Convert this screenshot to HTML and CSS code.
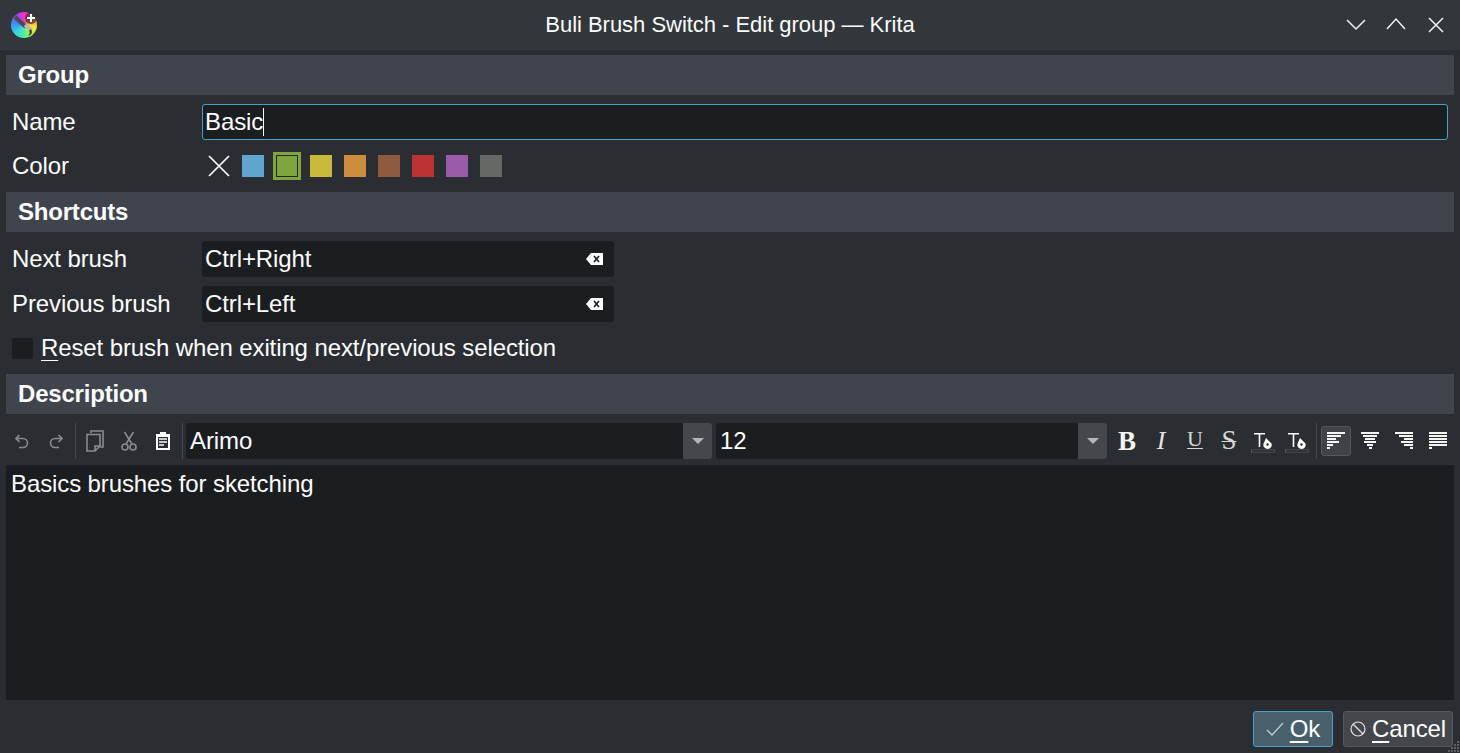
FILE: index.html
```html
<!DOCTYPE html>
<html lang="en">
<head>
<meta charset="utf-8">
<title>Buli Brush Switch - Edit group — Krita</title>
<link rel="stylesheet" href="styles.css">
</head>
<body>
<div class="window">
  <header class="titlebar">
    <div class="title-left">
      <span class="logo">
        <svg class="logo-art" width="26" height="26" viewBox="0 0 26 26">
          <path d="M4 5 L15 15" stroke="#4a4a50" stroke-width="4" fill="none"/>
          <path d="M14 13 L20 18" stroke="#b8b8b8" stroke-width="4" fill="none"/>
          <path d="M20 17 Q23 22 17 24 Q20 20 18 19 Z" fill="#33333a"/>
          <circle cx="20" cy="6" r="6" fill="#3a3440" opacity=".75"/>
          <path d="M20 2 V10 M16 6 H24" stroke="#fff" stroke-width="2"/>
        </svg>
      </span>
    </div>
    <div class="title">Buli Brush Switch - Edit group — Krita</div>
    <div class="win-buttons">
      <svg class="win-btn" width="40" height="50" viewBox="0 0 40 50"><path d="M11 20 L20 29 L29 20" /></svg>
      <svg class="win-btn" width="40" height="50" viewBox="0 0 40 50"><path d="M11 29 L20 19 L29 29" /></svg>
      <svg class="win-btn" width="40" height="50" viewBox="0 0 40 50"><path d="M13 18 L27 32 M27 18 L13 32" /></svg>
    </div>
  </header>

  <main class="content">
    <h2 class="section-head">Group</h2>
    <div class="form-row row-name">
      <label class="form-label">Name</label>
      <div class="field field-focus">Basic<span class="caret"></span></div>
    </div>
    <div class="form-row row-color">
      <label class="form-label">Color</label>
      <div class="swatches">
        <svg class="swatch-none" width="22" height="22" viewBox="0 0 22 22"><path d="M1 1 L21 21 M21 1 L1 21"/></svg>
        <span class="swatch c-blue"></span>
        <span class="swatch-selected"><span class="swatch-inner"></span></span>
        <span class="swatch c-yellow"></span>
        <span class="swatch c-orange"></span>
        <span class="swatch c-brown"></span>
        <span class="swatch c-red"></span>
        <span class="swatch c-purple"></span>
        <span class="swatch c-grey"></span>
      </div>
    </div>

    <h2 class="section-head head-shortcuts">Shortcuts</h2>
    <div class="form-row row-shortcut">
      <label class="form-label">Next brush</label>
      <div class="field field-short">
        <span>Ctrl+Right</span>
        <svg class="clear-icon" width="18" height="12" viewBox="0 0 18 12"><path d="M5 0 H17 V12 H5 L0 6 Z" fill="#fcfcfc"/><path d="M8 3 L13 9 M13 3 L8 9" stroke="#1b1e20" stroke-width="1.6"/></svg>
      </div>
    </div>
    <div class="form-row row-shortcut">
      <label class="form-label">Previous brush</label>
      <div class="field field-short">
        <span>Ctrl+Left</span>
        <svg class="clear-icon" width="18" height="12" viewBox="0 0 18 12"><path d="M5 0 H17 V12 H5 L0 6 Z" fill="#fcfcfc"/><path d="M8 3 L13 9 M13 3 L8 9" stroke="#1b1e20" stroke-width="1.6"/></svg>
      </div>
    </div>
    <div class="check-row">
      <span class="checkbox"></span>
      <span><u>R</u>eset brush when exiting next/previous selection</span>
    </div>

    <h2 class="section-head">Description</h2>
    <div class="toolbar">
      <span class="tool dim"><svg width="14" height="15" viewBox="0 0 14 15"><path d="M4.5 1 L1 4.5 L4.5 8 M1 4.5 H8 A4.5 4.5 0 0 1 8 13.5 H4" class="stroke"/></svg></span>
      <span class="tool dim"><svg width="14" height="15" viewBox="0 0 14 15"><path d="M9.5 1 L13 4.5 L9.5 8 M13 4.5 H6 A4.5 4.5 0 0 0 6 13.5 H10" class="stroke"/></svg></span>
      <span class="sep"></span>
      <span class="tool dim"><svg width="18" height="22" viewBox="0 0 18 22"><path d="M5 3 V1 H17 V17 H14" class="stroke"/><path d="M1 4.5 H14 V16 L9 21 H1 Z M14 16 H9 V21" class="stroke"/></svg></span>
      <span class="tool dim"><svg width="16" height="20" viewBox="0 0 16 20"><path d="M3.5 1 L11 13 M12.5 1 L5 13" class="stroke"/><circle cx="4" cy="16" r="3" class="stroke"/><circle cx="12" cy="16" r="3" class="stroke"/></svg></span>
      <span class="tool"><svg width="16" height="20" viewBox="0 0 16 20"><path d="M1 3 H5 V1 H11 V3 H15 V19 H1 Z" fill="#fcfcfc"/><path d="M3 6 H13 V17 H3 Z" fill="#2a2e32"/><path d="M4 8 H12 M4 11 H12 M4 14 H9" stroke="#fcfcfc" stroke-width="1.6"/></svg></span>
      <span class="sep sep-tight"></span>
      <div class="combo combo-font"><span class="combo-text">Arimo</span><span class="combo-arrow"><span class="triangle"></span></span></div>
      <div class="combo combo-size"><span class="combo-text">12</span><span class="combo-arrow"><span class="triangle"></span></span></div>
      <span class="tool glyph g-bold">B</span>
      <span class="tool glyph g-italic">I</span>
      <span class="tool glyph g-under">U</span>
      <span class="tool glyph g-strike">S</span>
      <span class="tool tool-color"><svg width="24" height="24" viewBox="0 0 24 24"><path d="M3 4.7 H14 M8.5 4 V18" stroke="#fcfcfc" stroke-width="1.6" fill="none"/><path d="M15 9 L20.5 14.5 A4.2 4.2 0 1 1 12.4 15 Z" fill="#fcfcfc"/><circle cx="16.5" cy="15.5" r="1.2" fill="#2a2e32"/><rect x=".5" y="21" width="23" height="2" fill="#15181a" stroke="#777" stroke-width=".6"/></svg></span>
      <span class="tool tool-color"><svg width="24" height="24" viewBox="0 0 24 24"><path d="M3 4.7 H14 M8.5 4 V18" stroke="#fcfcfc" stroke-width="1.6" fill="none"/><path d="M15 9 L20.5 14.5 A4.2 4.2 0 1 1 12.4 15 Z" fill="#fcfcfc"/><circle cx="16.5" cy="15.5" r="1.2" fill="#2a2e32"/><rect x=".5" y="21" width="23" height="2" fill="#15181a" stroke="#777" stroke-width=".6"/></svg></span>
      <span class="sep"></span>
      <span class="tool tool-active"><svg width="18" height="18" viewBox="0 0 18 18" class="bars"><rect width="18" height="2"/><rect y="3" width="14" height="2"/><rect y="6" width="9" height="2"/><rect y="9" width="12" height="2"/><rect y="12" width="6" height="2"/><rect y="15" width="3" height="2"/></svg></span>
      <span class="tool"><svg width="18" height="18" viewBox="0 0 18 18" class="bars"><rect width="18" height="2"/><rect x="2" y="3" width="14" height="2"/><rect x="4" y="6" width="10" height="2"/><rect x="3" y="9" width="12" height="2"/><rect x="6" y="12" width="6" height="2"/><rect x="8" y="15" width="3" height="2"/></svg></span>
      <span class="tool"><svg width="18" height="18" viewBox="0 0 18 18" class="bars"><rect width="18" height="2"/><rect x="4" y="3" width="14" height="2"/><rect x="9" y="6" width="9" height="2"/><rect x="6" y="9" width="12" height="2"/><rect x="9" y="12" width="9" height="2"/><rect x="15" y="15" width="3" height="2"/></svg></span>
      <span class="tool"><svg width="18" height="18" viewBox="0 0 18 18" class="bars"><rect width="18" height="2"/><rect y="3" width="18" height="2"/><rect y="6" width="18" height="2"/><rect y="9" width="18" height="2"/><rect y="12" width="18" height="2"/><rect y="15" width="3" height="2"/></svg></span>
    </div>
    <div class="editor">Basics brushes for sketching</div>
    <footer class="actions">
      <button class="btn btn-primary"><svg width="18" height="16" viewBox="0 0 18 16"><path d="M1 9 L6 14 L17 2" fill="none" stroke="#c4ccd0" stroke-width="1.3"/></svg><span><u>O</u>k</span></button>
      <button class="btn btn-cancel"><svg width="16" height="16" viewBox="0 0 16 16"><circle cx="8" cy="8" r="7" fill="none" stroke="#e4e4e4" stroke-width="1.2"/><path d="M3 3 L13 13" stroke="#e4e4e4" stroke-width="1.2"/></svg><span><u>C</u>ancel</span></button>
    </footer>
  </main>
  <svg class="grip" width="12" height="12" viewBox="0 0 12 12">
    <g fill="#5c6064"><rect x="9" y="0" width="2" height="2"/><rect x="6" y="3" width="2" height="2"/><rect x="9" y="3" width="2" height="2"/><rect x="3" y="6" width="2" height="2"/><rect x="6" y="6" width="2" height="2"/><rect x="9" y="6" width="2" height="2"/><rect x="0" y="9" width="2" height="2"/><rect x="3" y="9" width="2" height="2"/><rect x="6" y="9" width="2" height="2"/><rect x="9" y="9" width="2" height="2"/></g>
  </svg>
</div>
</body>
</html>
```
FILE: styles.css
```css
* { box-sizing: border-box; }
html, body { margin: 0; padding: 0; height: 100%; overflow: hidden; }
body {
  background: #2a2e32;
  color: #fcfcfc;
  font-family: "Liberation Sans", Arial, sans-serif;
  font-size: 24px;
  line-height: 28px;
  letter-spacing: -0.11px;
}
.window { position: relative; width: 1460px; height: 753px; display: flex; flex-direction: column; }

/* title bar */
.titlebar {
  height: 50px;
  flex: none;
  background: #32373b;
  display: grid;
  grid-template-columns: 1fr auto 1fr;
  align-items: center;
}
.title-left { padding-left: 11px; display: flex; align-items: center; }
.logo {
  position: relative;
  width: 26px;
  height: 26px;
  border-radius: 50%;
  background: conic-gradient(from 0deg, #ff2bd0 0deg, #ff6a3c 50deg, #ffe23c 100deg, #b8f03c 135deg, #4cf0a0 180deg, #38d0e8 230deg, #3c8cf0 280deg, #a040f0 325deg, #ff2bd0 360deg);
}
.logo-art { position: absolute; left: 0; top: 0; }
.title { text-align: center; white-space: nowrap; font-size: 22px; letter-spacing: -0.03px; }
.win-buttons { display: flex; justify-content: flex-end; padding-right: 4px; }
.win-btn path { fill: none; stroke: #f2f2f2; stroke-width: 1.5; }

/* main */
.content { flex: 1; min-height: 0; padding: 5px 6px 6px; display: flex; flex-direction: column; }
.section-head {
  margin: 0;
  height: 40px;
  flex: none;
  padding-left: 12px;
  background: #40454d;
  font-size: 24px;
  font-weight: 700;
  line-height: 40px;
  letter-spacing: -0.2px;
}
.head-shortcuts { margin-top: 12px; }
.form-row { display: flex; align-items: center; flex: none; padding-left: 6px; }
.form-label { width: 190px; flex: none; }
.row-name { margin-top: 9px; padding-right: 6px; }
.row-color { margin-top: 12px; height: 28px; }
.row-shortcut { margin-top: 9px; }
.field {
  height: 36px;
  flex: 1;
  background: #1b1e20;
  border-radius: 3px;
  padding: 0 3px;
  line-height: 36px;
  display: flex;
  align-items: center;
}
.field-focus { border: 1px solid #4a9fc9; padding: 0 2px; line-height: 34px; }
.caret { width: 1px; height: 28px; background: #fcfcfc; }
.field-short { flex: none; width: 412px; justify-content: space-between; padding-right: 10px; }

.swatches { display: flex; align-items: center; margin-left: 6px; }
.swatch-none { margin-right: 12px; }
.swatch-none path { fill: none; stroke: #fcfcfc; stroke-width: 1.7; }
.swatch { width: 22px; height: 22px; margin-right: 12px; }
.swatch-selected {
  width: 28px;
  height: 28px;
  margin: 0 9px 0 -3px;
  background: #7fa63e;
  display: flex;
  align-items: center;
  justify-content: center;
}
.swatch-inner { width: 22px; height: 22px; border: 1px solid #232a1c; background: #7fa63e; }
.c-blue { background: #5fa5d0; }
.c-yellow { background: #c8b93c; }
.c-orange { background: #cc8e3e; }
.c-brown { background: #8e5a40; }
.c-red { background: #bd3232; }
.c-purple { background: #9a5ca8; }
.c-grey { background: #666866; }

.check-row {
  margin: 9px 0 9px;
  height: 34px;
  flex: none;
  padding-left: 6px;
  display: flex;
  align-items: center;
  gap: 8px;
}
.check-row u { text-underline-offset: 4px; text-decoration-thickness: 1px; }
.checkbox { width: 21px; height: 21px; background: #1b1e20; border-radius: 2px; }

/* toolbar */
.toolbar { margin-top: 9px; height: 36px; flex: none; display: flex; align-items: center; padding-left: 1px; gap: 4px; }
.tool {
  width: 30px;
  height: 30px;
  flex: none;
  display: flex;
  align-items: center;
  justify-content: center;
}
.dim { opacity: .45; }
.stroke { fill: none; stroke: #fcfcfc; stroke-width: 1.6; }
.sep { width: 1px; height: 36px; flex: none; background: #44484d; }
.sep-tight { margin-right: -1px; }
.combo {
  height: 36px;
  flex: none;
  display: flex;
  background: #1b1e20;
  border-radius: 3px;
  padding-left: 4px;
}
.combo-font { width: 526px; }
.combo-size { width: 391px; }
.combo-text { flex: 1; line-height: 36px; }
.combo-arrow {
  width: 29px;
  background: #44484c;
  border-radius: 0 3px 3px 0;
  display: flex;
  align-items: center;
  justify-content: center;
}
.triangle {
  width: 0;
  height: 0;
  border-left: 6px solid transparent;
  border-right: 6px solid transparent;
  border-top: 6px solid #b4b6b8;
}
.glyph { font-family: "Liberation Serif", "Times New Roman", serif; color: #f4f4f4; }
.g-bold { font-weight: 700; font-size: 27px; margin-left: 1px; }
.g-italic { font-style: italic; font-size: 26px; color: #e4e4e4; }
.g-under { font-size: 22px; padding-bottom: 4px; text-decoration: underline; text-decoration-thickness: 1px; text-underline-offset: 2px; color: #d8d8d8; }
.g-strike { font-size: 27px; padding-bottom: 2px; text-decoration: line-through; text-decoration-thickness: 1px; color: #d8d8d8; }
.tool-active { background: #3f4347; border: 1px solid #55595d; border-radius: 3px; }
.bars rect { fill: #f4f4f4; }

/* editor */
.editor {
  margin-top: 6px;
  flex: 1;
  min-height: 0;
  background: #1b1e20;
  padding: 5px 5px;
}

/* footer */
.actions { margin-top: 11px; height: 36px; flex: none; display: flex; justify-content: flex-end; gap: 10px; padding-right: 1px; }
.btn {
  height: 36px;
  border-radius: 3px;
  font: inherit;
  letter-spacing: inherit;
  color: #fcfcfc;
  padding: 0;
  display: flex;
  align-items: center;
  justify-content: center;
  gap: 6px;
}
.btn u { text-underline-offset: 4px; text-decoration-thickness: 2px; }
.btn-primary { width: 80px; background: #47606c; border: 1px solid #4a9fc9; }
.btn-cancel { width: 110px; background: #43474b; border: 1px solid #55595d; }
.grip { position: absolute; right: 0; bottom: 0; }
```
